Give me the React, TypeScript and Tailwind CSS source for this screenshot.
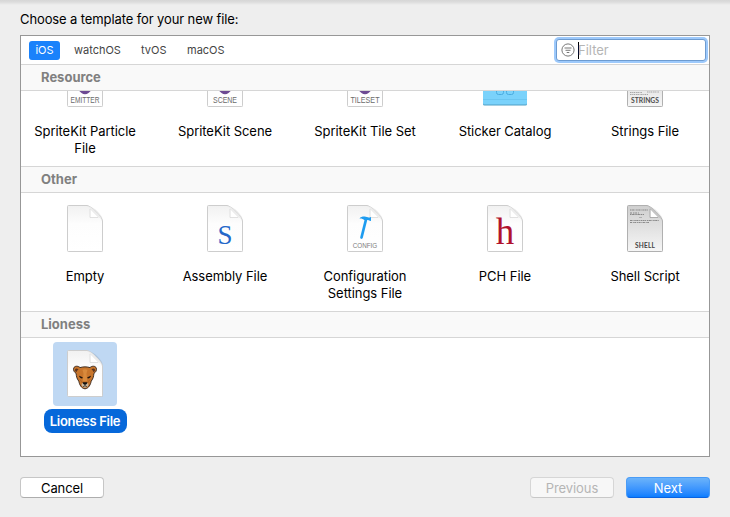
import React from "react";

type Kind =
  | "emitter" | "scene" | "tileset" | "sticker" | "strings"
  | "empty" | "assembly" | "config" | "pch" | "shell" | "lioness";

const UI = "Inter, 'Liberation Sans', sans-serif";

function Caption({ children, size = 8.5, weight = 400, fill = "#6b6b6b", length, y = 51 }: {
  children: string; size?: number; weight?: number; fill?: string; length: number; y?: number;
}) {
  return (
    <text x="32" y={y} textAnchor="middle" textLength={length} lengthAdjust="spacingAndGlyphs"
      fontFamily="'Liberation Sans', sans-serif" fontSize={size} fontWeight={weight} fill={fill}>{children}</text>
  );
}

function Page({ id, dark = false }: { id: string; dark?: boolean }) {
  return (
    <>
      <defs>
        <linearGradient id={`${id}-page`} x1="0" y1="0" x2="0" y2="1">
          <stop offset="0" stopColor={dark ? "#cfcfcf" : "#f1f1f1"} />
          <stop offset="0.4" stopColor={dark ? "#dedede" : "#fdfdfd"} />
          <stop offset="1" stopColor={dark ? "#f6f6f6" : "#ffffff"} />
        </linearGradient>
      </defs>
      <path d="M15 9.500h21.500c4 0 13.200 9 13.200 13.200V55H15z" fill="#000" opacity="0.09" />
      <path d="M14.500 9.500q0-1 1-1H34c3.500 0 15.500 12 15.500 15.500V53.500q0 1-1 1h-33q-1 0-1-1z"
        fill={`url(#${id}-page)`} stroke={dark ? "#b0b0b0" : "#cdcdcd"} strokeWidth="1" />
      <path d="M35 9c1.500 1 2 2.500 2 5v6.500h6.500c2.500 0 4.500.5 5.500 2.500C48 19 39 10 35 9z"
        fill={dark ? "#c4c4c4" : "#ececec"} />
      <path d="M37.300 12.500v7.700h7.700z" fill="#fff" />
      <path d="M37 12v8.500h8" fill="none" stroke={dark ? "#999" : "#d9d9d9"} strokeWidth="0.7" />
    </>
  );
}

function CodeLines({ top }: { top: number }) {
  return (
    <g stroke="#666" strokeWidth="0.7" fill="none">
      <path d={`M17 ${top}h18`} strokeDasharray="1.500 .6 2 .5 .8 .8" />
      <path d={`M17 ${top + 3}h9`} strokeDasharray="2 1 1.500 .6" />
      <path d={`M17 ${top + 4.5}h14`} strokeDasharray="1.500 .6 2.500 .7" />
      <path d={`M26 ${top + 7.5}h3`} opacity="0.5" />
      <path d={`M17 ${top + 10.5}h29`} strokeDasharray="2 .5 1 .8 1.500 .5" />
      <path d={`M17 ${top + 12.5}h19`} strokeDasharray="2 .8 1 .5" />
    </g>
  );
}

function LionessFace() {
  return (
    <g strokeLinejoin="round">
      <path d="M27 25.600c-2-2-5.500-1.800-6.300.5-.7 2.200.7 4.300 2.400 5.300.3 3 .5 4.800 2.700 7.800.6 3.200 2.500 7.300 6.200 7.600 3.700-.3 5.600-4.400 6.200-7.600 2.200-3 2.400-4.800 2.700-7.800 1.700-1 3.100-3.100 2.400-5.300-.8-2.300-4.300-2.500-6.300-.5-3-1-7-1-10 0z"
        fill="#c8752b" stroke="#2e1f18" strokeWidth="0.9" />
      <path d="M22 27.500c.8-1.400 2.300-1.200 3.600 0-1.300.5-1.800 1.600-2.200 2.800-1-.5-1.600-1.700-1.400-2.800zm20 0c-.8-1.400-2.300-1.200-3.600 0 1.300.5 1.800 1.600 2.200 2.800 1-.5 1.600-1.700 1.400-2.800z" fill="#5b3520" />
      <path d="M29.500 28q2.500-1.500 5 0l-1 3.500.7 7.500h-4.400l.7-7.500z" fill="#d98a3c" />
      <path d="M26.300 34l3.200 1.500-.3.700c-1.300.1-2.500-.6-2.900-2.200zm11.400 0l-3.200 1.500.3.700c1.300.1 2.500-.6 2.900-2.200z" fill="#17110f" stroke="#17110f" strokeWidth="0.4" />
      <path d="M27 37.500c1 1.500 2 2.300 2.400 3.500m7.600-3.500c-1 1.500-2 2.300-2.400 3.500" stroke="#a35d22" strokeWidth="0.7" fill="none" />
      <path d="M28.800 41.500c1-.8 5.400-.8 6.400 0 .7 2.200-.6 4-3.200 4.300-2.600-.3-3.900-2.100-3.200-4.300z" fill="#cbb79c" />
      <path d="M29.700 40.200h4.600c0 1.400-.9 2.200-2.300 2.600-1.400-.4-2.300-1.200-2.300-2.600z" fill="#111" />
      <path d="M32 42v2m-2 .7c.9-.6 1.400-.7 2-.7s1.100.1 2 .7" stroke="#222" strokeWidth="0.7" fill="none" />
    </g>
  );
}

function FileIcon({ kind }: { kind: Kind }) {
  if (kind === "sticker") {
    return (
      <svg width="64" height="64" viewBox="0 0 64 64" className="block">
        <rect x="10" y="12" width="44" height="41.500" rx="1.500" fill="#4f9fc4" />
        <rect x="10" y="12" width="44" height="40.500" rx="1.500" fill="#7ad2fb" />
        <path d="M10 47.500h44" stroke="#6cc6f1" />
        <g fill="none" stroke="#4aacdf">
          <rect x="23.500" y="34.500" width="7" height="8" rx="2" />
          <rect x="33.500" y="34.500" width="7" height="8" rx="2" />
        </g>
      </svg>
    );
  }
  return (
    <svg width="64" height="64" viewBox="0 0 64 64" className="block">
      <Page id={kind} dark={kind === "shell" || kind === "strings"} />
      {(kind === "emitter" || kind === "scene" || kind === "tileset") && (
        <path d="M23 30h18v6l-5.500 5q-3.500 2.500-7 0L23 36z" fill="#6d4a93" />
      )}
      {kind === "emitter" && <Caption length={29}>EMITTER</Caption>}
      {kind === "scene" && <Caption length={24}>SCENE</Caption>}
      {kind === "tileset" && <Caption length={29}>TILESET</Caption>}
      {kind === "strings" && (
        <>
          <path d="M17 40.500h12M17 42.500h18M34 40h12" stroke="#888" strokeWidth="0.7" strokeDasharray="1.500 .7 1 .5" />
          <text x="32" y="51" textAnchor="middle" textLength="28" lengthAdjust="spacingAndGlyphs"
            fontFamily="Lato, sans-serif" fontSize="7.500" fontWeight="700" fill="#4d4d4d">STRINGS</text>
        </>
      )}
      {kind === "assembly" && (
        <text x="32" y="46.500" textAnchor="middle" fontFamily="'Liberation Serif', serif" fontSize="27" fill="#2468c9">S</text>
      )}
      {kind === "config" && (
        <>
          <path d="M33 22.500L28.500 40.500" stroke="#1e9cf0" strokeWidth="2.700" strokeLinecap="round" />
          <path d="M26.500 21.500c1-1.700 4-2.200 6.200-1.800 1.800.3 2.800.8 4 .8l1.300-.5v4l-1.300-.3c-.7-.7-1.500-.8-2.700-.7h-3c-1-1.200-2.500-1.700-4.500-1.500z" fill="#1e9cf0" />
          <Caption length={24.5} size={8} fill="#7d7d7d">CONFIG</Caption>
        </>
      )}
      {kind === "pch" && (
        <text x="32" y="46.500" textAnchor="middle" fontFamily="'Liberation Serif', serif" fontSize="37" fill="#b1122d">h</text>
      )}
      {kind === "shell" && (
        <>
          <CodeLines top={13} />
          <text x="32" y="51" textAnchor="middle" textLength="20" fontFamily="Lato, sans-serif"
            fontSize="6.500" fontWeight="700" fill="#444">SHELL</text>
        </>
      )}
      {kind === "lioness" && <LionessFace />}
    </svg>
  );
}

function Item({ kind, lines, selected = false }: {
  kind: Kind; lines: string[]; selected?: boolean;
}) {
  return (
    <div className="flex w-[140px] flex-col items-center">
      <div className={selected ? "rounded bg-[#bfd8f3]" : ""}><FileIcon kind={kind} /></div>
      <div className={`mt-[3px] flex min-h-6 flex-col items-center whitespace-nowrap text-[13px] leading-[17px] ${
        selected ? "w-[83px] justify-center rounded-lg bg-[#0668da] font-semibold tracking-[-0.3px] text-white" : "justify-start pt-1 tracking-[-0.05px] text-black"
      }`}>
        {lines.map((l) => <span key={l}>{l}</span>)}
      </div>
    </div>
  );
}

function Heading({ title, first = false }: { title: string; first?: boolean }) {
  return (
    <div className={`flex shrink-0 items-center border-b border-[#d6d6d6] bg-[#f9f9f9] pl-5 text-[13px] font-bold text-[#808080] ${
      first ? "h-[26px]" : "h-[27px] border-t"
    }`}>{title}</div>
  );
}

export default function App() {
  return (
    <div className="flex h-[517px] w-[730px] flex-col overflow-hidden bg-[#eeeeee] bg-[linear-gradient(#d6d6d6_0,#dcdcdc_2px,#eeeeee_5px)] px-5 text-black" style={{ fontFamily: UI }}>
      <div className="flex h-[35px] shrink-0 items-center pt-1 text-[13px]">
        <span className="whitespace-nowrap tracking-[-0.11px]">Choose a template for your new file:</span>
      </div>

      <div className="flex h-[422px] w-[690px] shrink-0 flex-col overflow-hidden border border-[#979797] bg-white">
        <div className="flex h-[29px] shrink-0 items-center border-b border-[#d6d6d6] pl-2 pr-[3px] text-[11px] text-[#444]">
          <span className="flex h-[19px] w-[31px] items-center justify-center rounded-[3px] bg-[#1a82fb] text-white">iOS</span>
          <span className="ml-[14px] w-[67px]">watchOS</span>
          <span className="w-[46px]">tvOS</span>
          <span>macOS</span>
          <div className="ml-auto flex h-[22px] w-[150px] items-center rounded-[3px] border border-[#6d9bd0] bg-white pl-1 text-[13px] text-[#b5b5b5] shadow-[0_0_0_2px_#9dc9fb]">
            <svg width="14" height="14" viewBox="0 0 14 14" fill="none" stroke="#777" className="block">
              <circle cx="7" cy="7" r="6.100" />
              <path d="M3.500 5h7M4.500 7.300h5M5.700 9.500h2.600" />
            </svg>
            <span className="ml-[3px] h-[17px] w-px bg-black" />
            <span className="-ml-px pt-0.5">Filter</span>
          </div>
        </div>

        <Heading title="Resource" first />
        <div className="h-[75px] shrink-0 overflow-hidden">
          <div className="-mx-1.5 -mt-[39px] flex">
            <Item kind="emitter" lines={["SpriteKit Particle", "File"]} />
            <Item kind="scene" lines={["SpriteKit Scene"]} />
            <Item kind="tileset" lines={["SpriteKit Tile Set"]} />
            <Item kind="sticker" lines={["Sticker Catalog"]} />
            <Item kind="strings" lines={["Strings File"]} />
          </div>
        </div>

        <Heading title="Other" />
        <div className="h-[118px] shrink-0 overflow-hidden">
          <div className="-mx-1.5 flex pt-1">
            <Item kind="empty" lines={["Empty"]} />
            <Item kind="assembly" lines={["Assembly File"]} />
            <Item kind="config" lines={["Configuration", "Settings File"]} />
            <Item kind="pch" lines={["PCH File"]} />
            <Item kind="shell" lines={["Shell Script"]} />
          </div>
        </div>

        <Heading title="Lioness" />
        <div className="-mx-1.5 flex pt-1">
          <Item kind="lioness" lines={["Lioness File"]} selected />
        </div>
      </div>

      <div className="mt-5 flex items-start text-[13px]">
        <button className="h-[21px] w-[84px] rounded border border-[#c6c6c6] border-b-[#adadad] bg-white leading-[18px] tracking-[-0.1px]">Cancel</button>
        <button className="ml-auto h-[21px] w-[84px] rounded border border-[#d6d6d6] border-b-[#c8c8c8] bg-[#f7f7f7] leading-[18px] tracking-[-0.1px] text-[#b5b5b5]">Previous</button>
        <button className="ml-3 h-[21px] w-[84px] rounded border border-[#4a9cf6] border-b-[#0a62e0] bg-linear-to-b from-[#6bb3fa] to-[#087dff] leading-[18px] text-white">Next</button>
      </div>
    </div>
  );
}
